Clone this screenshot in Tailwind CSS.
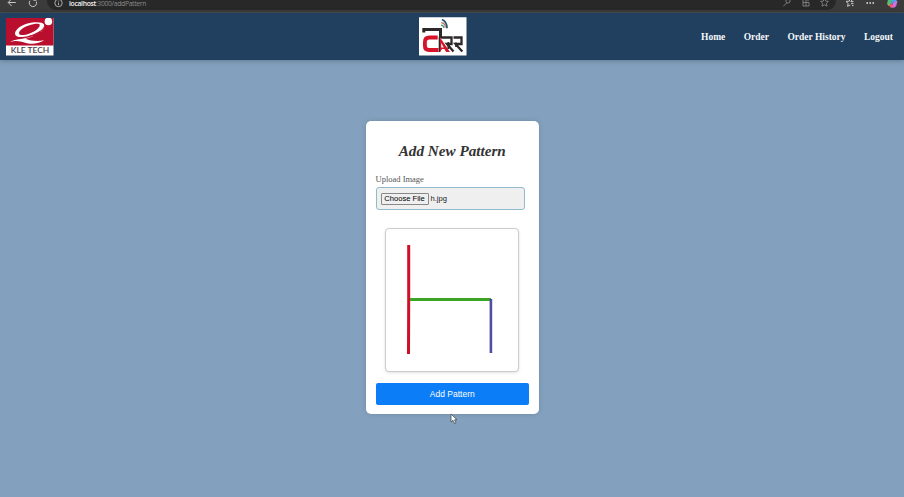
<!DOCTYPE html>
<html lang="en">
<head>
<meta charset="utf-8">
<title>Add New Pattern</title>
<script src="https://cdn.jsdelivr.net/npm/@tailwindcss/browser@4"></script>
</head>
<body class="w-[904px] h-[497px] overflow-hidden flex flex-col bg-[#83a1be] font-['Liberation_Serif',serif]">
  <div class="h-[13px] shrink-0 bg-[#3b3b3b] border-b border-[#4b4e51] flex items-start overflow-hidden text-[#c8c8c8]">
    <div class="w-[47px] shrink-0">
      <svg class="block" width="47" height="10" fill="none" stroke="#c8c8c8" stroke-width="1"><path d="M8.3 2.5H15.8M11.6-1 8.2 2.5 11.6 6"/><path d="M29.9.8A3.7 3.7 0 1 0 36.4 1.6M33.3.2H36.4V-3"/></svg>
    </div>
    <div class="w-[789px] h-[10px] shrink-0 bg-[#282828] rounded-b-[9px] flex items-start justify-between">
      <div class="flex">
        <svg class="block w-[22px] h-[10px] shrink-0" fill="none" stroke="#b8b8b8" stroke-width=".9"><circle cx="11.5" cy="3" r="3.7"/><path d="M11.5 2.6V5M11.5.8V1.6"/></svg>
        <div class="-mt-px h-[9px] leading-[9px] text-[6.8px] tracking-[-0.32px] font-['Open_Sans',sans-serif] text-[#888] whitespace-nowrap"><span class="text-[#f4f4f4] font-semibold">localhost</span>:3000/addPattern</div>
      </div>
      <svg class="block" width="60" height="10" fill="none" stroke="#858585" stroke-width=".9"><path d="M7.3 6.3 10.8 2.8"/><circle cx="12" cy="1" r="2.1"/><path d="M27-1V6H33V2.5M27 2.5H33M30-1V6M32-2V1M30.5-.5H34"/><path d="M48.5-1.8 49.7 1.1 52.4 1.4 50.4 3.3 51 6.1 48.5 4.8 46 6.1 46.6 3.3 44.6 1.4 47.3 1.1Z"/></svg>
    </div>
    <svg class="block" width="68" height="12" fill="none"><path d="M16 1.2 14.6-1.8 13.2 1.2 10 1.4 12.2 3.5 11.5 6.3 14.3 5M14.5 1.6H17.5M15 3.6H17.5M16 5.6H17.5" stroke="#ccc"/><g fill="#d0d0d0"><circle cx="31.2" cy="3" r=".9"/><circle cx="34.2" cy="3" r=".9"/><circle cx="37.2" cy="3" r=".9"/></g><path d="M51.3 2.5H54.5L53.8 5.5Q52.2 6.3 51.7 4.5Z" fill="#e8a94a"/><path d="M52-1H56.5L54.8 4.5H51.2Z" fill="#52bd70"/><path d="M57.8 1H61.5L60.3 5.5Q59.5 7.8 57 7.8H55.5Z" fill="#d06fe0"/><path d="M54.2 4.3H57.2L56.2 7.8Q53.6 7.8 53 5.2Z" fill="#f05a74"/><path d="M56-1H61L60.3 1.6H57.5L56.5 4H55Z" fill="#46a8ef"/></svg>
  </div>

  <header class="h-[47px] shrink-0 bg-[#213f5e] grid grid-cols-[413px_48px_1fr] items-start pl-[6px] pr-[11px] shadow-[0_1px_5px_rgba(0,0,0,.25)]">
    <svg class="block mt-[5px]" width="48" height="38" viewBox="0 0 48 38">
      <path fill="#fff" d="M0 0H47.5V37.5H0Z"/><path fill="#b90e2d" d="M0 0H47.5V27.5H0Z"/>
      <circle cx="42.4" cy="3.4" r="3.8" fill="#fff"/>
      <path fill="#fff" fill-rule="evenodd" d="M38 6.5C36.5 2.8 21 3.2 13 9.5C6 15.2 8.8 19.8 16.5 19C27 18 39.5 11.5 38 6.5ZM33.8 6.7C34.2 10.5 25.5 16 18 17C12.8 17.7 11.5 15 15 11.7C20 7 32.5 4.3 33.8 6.7Z"/>
      <path fill="#fff" d="M38.3 7C38.5 12.5 31.5 17.3 22.5 19.5C15.5 21.2 9 21.1 4 24C10.5 21.5 15.5 23.8 21 25.2C28 26.6 33.2 25 38.3 22.2C30 23.8 25.5 22.7 19.5 20.7C29 18.6 39.2 13 38.3 7Z"/>
      <text x="4.8" y="35.4" textLength="38.4" lengthAdjust="spacingAndGlyphs" font-family="Lato, sans-serif" font-weight="600" font-size="7.6" fill="#454049">KLE TECH</text>
    </svg>
    <svg class="block mt-[4px]" width="48" height="39" viewBox="0 0 48 39">
      <path fill="#fff" d="M0 .3H47.5V38.5H0Z"/>
      <path fill="none" stroke="#2c2829" stroke-width="3" d="M4.8 15.5V12.6H21.5V21"/>
      <path fill="none" stroke="#2c2829" stroke-width="1.6" d="M20.5 20V35"/>
      <path fill="none" stroke="#d5142b" stroke-width="3.8" d="M18.7 20.5H10.5Q5.9 20.5 5.9 25V29Q5.9 33 10 33H19.5"/>
      <path fill="#d5142b" fill-rule="evenodd" d="M21 20.5 31 35H27.2L25.3 32H23L21 35ZM22.2 26V30.5H24.8Z"/>
      <path fill="none" stroke="#2c2829" stroke-width="2.3" d="M22 20.5H32.5V27H28L34.5 34.5M34.5 20.5H42.5V27H36.5L43.3 34.5"/>
      <path fill="none" stroke="#2c2829" stroke-width="1.7" d="M29.3 25V32M37 25.5V30"/>
      <path fill="none" stroke="#4a9b8a" stroke-width="1.3" d="M22 8.2Q24.5 8.2 25 11"/>
      <path fill="none" stroke="#b77250" stroke-width="1.2" d="M22.3 5.6Q26 6 26.5 10.5"/>
      <path fill="none" stroke="#20536e" stroke-width="1.8" d="M23 2.5Q28.1 4.8 28 11.3"/>
    </svg>
    <nav class="flex justify-end gap-[18.4px] h-[47px] items-center text-[9.5px] leading-none font-bold text-[#f4f7fa] whitespace-nowrap pt-[2px]">
      <a>Home</a><a>Order</a><a>Order History</a><a>Logout</a>
    </nav>
  </header>

  <main class="flex-1 flex flex-col items-center pt-[61px]">
    <section class="w-[173px] h-[293px] bg-white rounded-[5px] pl-[10px] pr-[9.5px] shadow-[0_0_5px_rgba(0,0,0,.15)] flex flex-col">
      <h1 class="mt-[20px] h-[19px] leading-[19px] text-center text-[15.2px] font-bold italic text-[#333] whitespace-nowrap">Add New Pattern</h1>
      <label class="mt-[14px] h-[10px] leading-[10px] text-[8.5px] text-[#555]">Upload Image</label>
      <div class="mt-[3px] w-[149px] h-[23px] shrink-0 bg-[#efefef] border border-[#90bbcd] rounded-[3px] flex items-center pl-[4px] gap-[2px] font-['Liberation_Sans',sans-serif] text-[7.6px] leading-none text-[#222] whitespace-nowrap">
        <button class="w-[48px] h-[12px] border border-[#888] rounded-[1px] bg-[#efefef] text-black leading-none">Choose File</button><span>h.jpg</span>
      </div>
      <div class="mt-[18px] ml-[9.5px] w-[134px] h-[144px] shrink-0 bg-white border border-[#ccc] rounded-[4px] shadow-[0_1px_3px_rgba(0,0,0,.12)]">
        <svg class="block" width="132" height="142" fill="none" stroke-width="3"><path stroke="#ce1027" d="M22.7 16V71L22.5 125"/><path stroke="#3da526" d="M24 70.5H105"/><path stroke="#4e4ca4" stroke-width="2.6" d="M104.9 70V124"/></svg>
      </div>
      <button class="mt-[11px] h-[22px] shrink-0 rounded-[2px] bg-[#0b7df7] text-white text-[8.5px] leading-none font-['Liberation_Sans',sans-serif]">Add Pattern</button>
    </section>
  </main>
  <svg class="absolute left-[450px] top-[413px]" width="9" height="12"><path d="M1 1V9L3 7.3 4.6 10.5 6 9.8 4.5 6.8H7Z" fill="#fff" stroke="#454b52" stroke-width=".8"/></svg>
</body>
</html>
